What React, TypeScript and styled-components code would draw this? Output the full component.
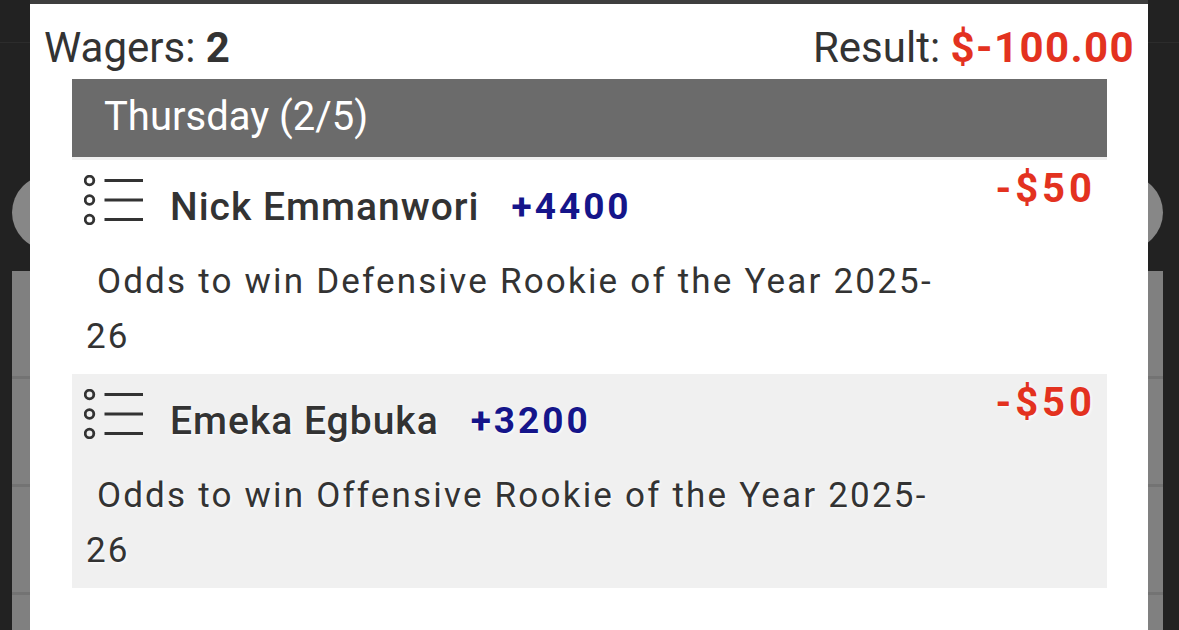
import React from "react";
import styled, { createGlobalStyle } from "styled-components";

const GlobalStyle = createGlobalStyle`
  html, body {
    margin: 0;
    padding: 0;
    background: #222222;
  }
  body {
    font-family: Roboto, "Noto Sans", sans-serif;
  }
`;

const Page = styled.div`
  display: flex;
  flex-direction: row;
  height: 630px;
  overflow: hidden;
  background: #222222;
`;

const Gutter = styled.div<{ $side: "left" | "right" }>`
  width: ${({ $side }) => ($side === "left" ? "30px" : "31px")};
  flex-shrink: 0;
  display: flex;
  flex-direction: column;
  overflow: hidden;
`;

const GutterTop = styled.div`
  height: 42px;
  flex-shrink: 0;
  border-bottom: 1px solid #2c2c2c;
`;

const RoundButton = styled.div<{ $side: "left" | "right" }>`
  width: 75px;
  height: 75px;
  flex-shrink: 0;
  border-radius: 50%;
  background: #878787;
  margin-top: 132px;
  margin-left: ${({ $side }) => ($side === "left" ? "12px" : "-60px")};
`;

const SidePanel = styled.div<{ $side: "left" | "right" }>`
  flex: 1;
  margin-top: 21px;
  background: #808080;
  ${({ $side }) => ($side === "left" ? "margin-left: 12px;" : "width: 15px;")}
`;

const PanelRow = styled.div`
  height: 105px;
  border-bottom: 3px solid #737373;
`;

const Modal = styled.div`
  flex: 1;
  background: #ffffff;
  border-top: 4px solid #3e3e3e;
  display: flex;
  flex-direction: column;
  color: #333333;
`;

const Summary = styled.div`
  display: flex;
  justify-content: space-between;
  align-items: center;
  margin-top: 19px;
  padding: 0 13px 0 14px;
  font-size: 42px;
  line-height: 50px;
  color: #333333;
`;

const Strong = styled.span<{ $red?: boolean }>`
  font-weight: 700;
  color: ${({ $red }) => ($red ? "#e3321f" : "#333333")};
  letter-spacing: ${({ $red }) => ($red ? "1.4px" : "0")};
`;

const Day = styled.div`
  margin: 6px 41px 0 42px;
  height: 78px;
  background: #6b6b6b;
  color: #ffffff;
  font-size: 40px;
  line-height: 76px;
  padding-left: 32px;
`;

const WagerList = styled.div`
  margin: 0 41px 0 42px;
  border-top: 3px solid #f0f0f0;
`;

const Wager = styled.div<{ $shaded?: boolean }>`
  height: 214px;
  box-sizing: border-box;
  padding: 5px 15px 10px 12px;
  background: ${({ $shaded }) => ($shaded ? "#f0f0f0" : "#ffffff")};
  text-shadow: 1px 1px 3px #ffffff;
`;

const WagerTop = styled.div`
  display: flex;
  justify-content: space-between;
  align-items: flex-start;
`;

const Pick = styled.div`
  display: flex;
  align-items: center;
  margin-top: 17px;
  height: 50px;
`;

const ListIcon = styled.svg`
  width: 62px;
  height: 50px;
  margin-bottom: 15px;
  flex-shrink: 0;
`;

const Player = styled.span`
  margin-left: 24px;
  font-size: 39px;
  font-weight: 500;
  letter-spacing: 1px;
  line-height: 50px;
  color: #333333;
`;

const Odds = styled.span`
  margin-left: 32px;
  font-size: 37px;
  font-weight: 700;
  letter-spacing: 3px;
  line-height: 50px;
  color: #15158a;
`;

const Amount = styled.span`
  font-size: 40px;
  font-weight: 700;
  letter-spacing: 4px;
  margin-right: -4px;
  line-height: 48px;
  color: #e3321f;
`;

const Market = styled.div`
  margin: 22px 0 0 2px;
  width: 870px;
  font-size: 35px;
  letter-spacing: 2.2px;
  line-height: 55px;
  color: #333333;
`;

const wagers = [
  {
    player: "Nick Emmanwori",
    odds: "+4400",
    amount: "-$50",
    market: "Odds to win Defensive Rookie of the Year 2025-26",
  },
  {
    player: "Emeka Egbuka",
    odds: "+3200",
    amount: "-$50",
    market: "Odds to win Offensive Rookie of the Year 2025-26",
  },
];

const BulletList = () => (
  <ListIcon viewBox="0 0 62 50">
    {[5.5, 25, 44.5].map((y) => (
      <g key={y}>
        <circle cx="5.5" cy={y} r="4.3" fill="none" stroke="#333" strokeWidth="2.8" />
        <line x1="20.5" y1={y} x2="59" y2={y} stroke="#333" strokeWidth="3" />
      </g>
    ))}
  </ListIcon>
);

const Side = ({ side }: { side: "left" | "right" }) => (
  <Gutter $side={side}>
    <GutterTop />
    <RoundButton $side={side} />
    <SidePanel $side={side}>
      <PanelRow />
      <PanelRow />
      <PanelRow />
    </SidePanel>
  </Gutter>
);

export default function App() {
  return (
    <>
      <GlobalStyle />
      <Page>
        <Side side="left" />
        <Modal>
          <Summary>
            <span>
              Wagers: <Strong>2</Strong>
            </span>
            <span>
              Result: <Strong $red>$-100.00</Strong>
            </span>
          </Summary>
          <Day>Thursday (2/5)</Day>
          <WagerList>
            {wagers.map((w, i) => (
              <Wager key={w.player} $shaded={i % 2 === 1}>
                <WagerTop>
                  <Pick>
                    <BulletList />
                    <Player>{w.player}</Player>
                    <Odds>{w.odds}</Odds>
                  </Pick>
                  <Amount>{w.amount}</Amount>
                </WagerTop>
                <Market>{"\u00a0" + w.market}</Market>
              </Wager>
            ))}
          </WagerList>
        </Modal>
        <Side side="right" />
      </Page>
    </>
  );
}
